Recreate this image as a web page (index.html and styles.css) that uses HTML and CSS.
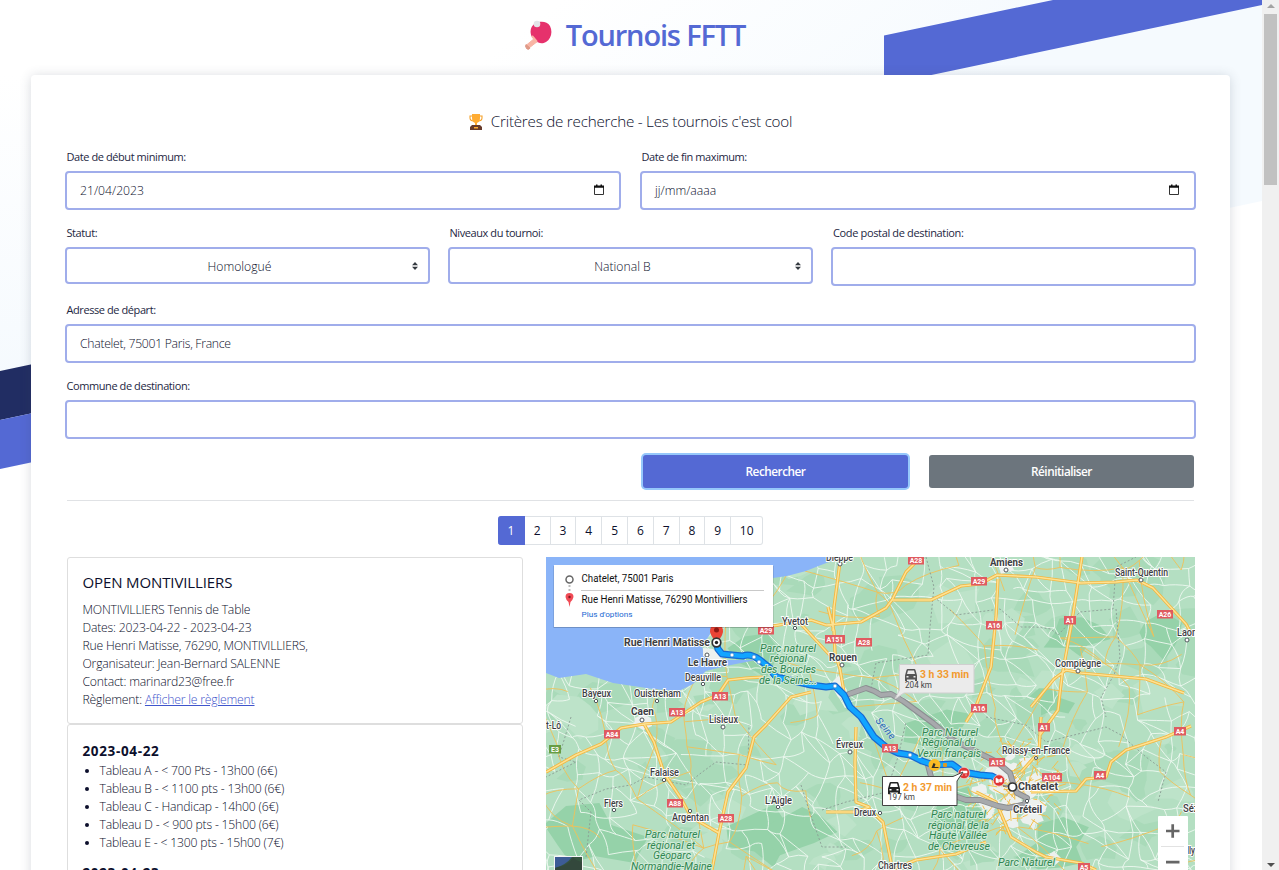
FILE: index.html
```html
<!DOCTYPE html>
<html lang="fr">
<head>
<meta charset="utf-8">
<title>Tournois FFTT</title>
<link rel="stylesheet" href="styles.css">
</head>
<body>
<div class="viewport">
<div class="page">
  <svg class="backdrop" viewBox="0 0 1262 870" aria-hidden="true">
    <defs><linearGradient id="sky" gradientUnits="userSpaceOnUse" x1="560" y1="0" x2="760" y2="260"><stop offset="0" stop-color="#fff"/><stop offset="1" stop-color="#f5fafe"/></linearGradient>
    <linearGradient id="skyLeft" x1="0" y1="0" x2="0" y2="1"><stop offset="0" stop-color="#fff"/><stop offset=".8" stop-color="#f5fafe"/></linearGradient></defs>
    <path d="M0 0H1262V201L0 469z" fill="url(#sky)"/>
    <path d="M0 75H31V463L0 469z" fill="url(#skyLeft)"/>
    <path d="M884 35.6L1053 0H1262V5L884 85z" fill="#5469d4"/>
    <path d="M0 371L378 291V340L0 420z" fill="#212d63"/>
    <path d="M0 420L378 340V389L0 469z" fill="#5469d4"/>
  </svg>
  <header class="brand">
    <svg class="paddle" viewBox="0 0 28 30"><path d="M11 18L2.500 25L5 28L14 21z" fill="#f8b5a5" stroke="#f8b5a5" stroke-linejoin="round"/><path d="M2 24.500l4 3.500-1 1.200-2-.2-1.500-2.500z" fill="#df9987" stroke="#df9987"/><path d="M8 17C5 11 7 6 11 3.500C16 1 23 1 26 6C29 12 27 19 22 22C18 24.500 14 23 12 21z" fill="#e6316c"/><path d="M8 16l5 6" stroke="#f8b5a5" stroke-width="2"/><circle cx="13" cy="4" r="3.300" fill="#e3e4e8"/></svg>
    <h1>Tournois FFTT</h1>
  </header>
  <main class="sheet">
    <h2 class="intro"><svg class="cup" viewBox="0 0 14 16"><path d="M3 2H1v2q0 3 4 3M11 2h2v2q0 3-4 3" fill="none" stroke="#f5a12a" stroke-width="1.100"/><path d="M3 0h8v4q0 4-3 5v3H6V9Q3 8 3 4z" fill="#ffac33"/><path d="M3 11h8l2 2v3H1v-3z" fill="#673b2b"/><path d="M5 13h4v1.500H5z" fill="#ffac33"/></svg><span>Critères de recherche - Les tournois c'est cool</span></h2>
    <form class="criteria">
      <div class="row halves">
        <label class="field"><span class="name">Date de début minimum:</span><span class="box wide"><span class="value">21/04/2023</span><svg class="cal" viewBox="0 0 12 12"><path d="M1.500 2.500h9v8h-9z" fill="none" stroke="#333" stroke-width="1"/><path d="M1 1.500h10v2.300H1zM3 .5h1.500v1H3zM7.500.5H9v1H7.500z" fill="#111"/></svg></span></label>
        <label class="field"><span class="name">Date de fin maximum:</span><span class="box wide"><span class="value">jj/mm/aaaa</span><svg class="cal" viewBox="0 0 12 12"><path d="M1.500 2.500h9v8h-9z" fill="none" stroke="#333" stroke-width="1"/><path d="M1 1.500h10v2.300H1zM3 .5h1.500v1H3zM7.500.5H9v1H7.500z" fill="#111"/></svg></span></label>
      </div>
      <div class="row thirds">
        <label class="field"><span class="name">Statut:</span><span class="box select"><span class="value">Homologué</span><svg class="caret" viewBox="0 0 6 8"><path d="M0 3.300L3 0l3 3.300zM0 4.700h6L3 8z" fill="#343a40"/></svg></span></label>
        <label class="field"><span class="name">Niveaux du tournoi:</span><span class="box select"><span class="value">National B</span><svg class="caret" viewBox="0 0 6 8"><path d="M0 3.300L3 0l3 3.300zM0 4.700h6L3 8z" fill="#343a40"/></svg></span></label>
        <label class="field"><span class="name postal">Code postal de destination:</span><span class="box"></span></label>
      </div>
      <div class="row"><label class="field"><span class="name">Adresse de départ:</span><span class="box"><span class="value address">Chatelet, 75001 Paris, France</span></span></label></div>
      <div class="row"><label class="field"><span class="name">Commune de destination:</span><span class="box"></span></label></div>
      <div class="actions"><button type="button" class="btn primary">Rechercher</button><button type="button" class="btn secondary">Réinitialiser</button></div>
    </form>
    <nav class="pages"><a class="current">1</a><a>2</a><a>3</a><a>4</a><a>5</a><a>6</a><a>7</a><a>8</a><a>9</a><a class="last">10</a></nav>
    <section class="results">
      <div class="details">
        <article class="card info">
          <h3>OPEN MONTIVILLIERS</h3>
          <p>MONTIVILLIERS Tennis de Table</p>
          <p>Dates: 2023-04-22 - 2023-04-23</p>
          <p>Rue Henri Matisse, 76290, MONTIVILLIERS,</p>
          <p>Organisateur: Jean-Bernard SALENNE</p>
          <p>Contact: marinard23@free.fr</p>
          <p>Règlement: <a class="link">Afficher le règlement</a></p>
        </article>
        <article class="card tables">
          <h4>2023-04-22</h4>
          <ul>
            <li>Tableau A - &lt; 700 Pts - 13h00 (6€)</li>
            <li>Tableau B - &lt; 1100 pts - 13h00 (6€)</li>
            <li>Tableau C - Handicap - 14h00 (6€)</li>
            <li>Tableau D - &lt; 900 pts - 15h00 (6€)</li>
            <li>Tableau E - &lt; 1300 pts - 15h00 (7€)</li>
          </ul>
          <h4>2023-04-23</h4>
        </article>
      </div>
      <svg class="map" viewBox="546 557 649 313">
        <g transform="translate(546 557)">
          <rect width="649" height="313" fill="#b4dfc2"/>
          <g id="woods"></g>
          <g id="minor" fill="none" stroke="#eef8f0" stroke-width=".9"></g>
          <g id="secondary" fill="none" stroke="#efc158" stroke-width=".9"></g>
          <path fill="#8ab4f8" d="M0 0H296L283 5L275 8L260 14L241 19L220 22L190 40L167 70L163 79L156 89L158 98L175 103L210 103L180 109L160 114L147 127L133 134L107 132L87 129L67 126L40 117L13 121L0 116z"/>
          <g fill="#edf1ef"><path d="M157 91l10 1 10 9-9 3-11-5zM89 161l8-4 8 4 1 8-9 4-9-5zM287 124l6-6 4 9 4 6-3 10-6-3-6-10zM452 7l12-2 4 8-13 4zM498 302l10-8 8 8-8 7z"/></g>
          <g id="suburbs" fill="#edf1ef"></g>
          <g id="streets" fill="none" stroke="#f3c04c" stroke-width="1"></g>
          <g fill="none" stroke="#8a9b93" stroke-dasharray="2 2" stroke-width=".9"><path d="M25 160L13 200L30 205L0 220M40 300L45 255L33 243L60 232L85 228L100 220L140 228L155 216L170 205L202 208L203 168M380 0L388 30L384 70L382 98L330 106L325 132M388 40L410 58L454 52L475 70L490 70L505 72L512 78L534 55L567 52L570 10L590 0M570 52L574 100L568 118L555 140L560 160M255 228L262 250L276 290L300 290M276 253L300 245L340 235L352 200L360 165M440 160L480 168L500 185L560 170L575 178L600 200L620 215L612 245"/></g>
          <g id="roads" fill="none" stroke-linejoin="round">
            <path d="M0 215L30 198L55 187L75 171L98 167L125 165L155 145L172 138L182 123L200 121L219 120M98 167L108 185L118 216L136 243L145 260L173 276L182 235L200 211L208 180L220 168L245 140L265 135M227 69L245 66L265 63L280 68L315 65L340 51L346 43L360 15L375 0M346 43L385 43L415 29L434 27L451 18L490 20L535 26L570 25L591 23L607 31L640 67L645 76M282 50L288 74L289 96L294 112L298 135M287 74L288 50L292 20L294 5M254 66L290 105M536 0L525 70L516 119L512 153L494 178M452 22L450 60L445 110L430 149L420 165M485 150L508 122L520 113L535 116L600 122L638 136M310 170L309 205L310 245L323 250L310 255L280 255M323 252L337 265L345 305M430 235L450 245L465 280L490 295M485 235L530 234L540 222L560 220L565 205L580 193L620 180L645 169M495 160L493 195L475 215M490 295L500 300L535 306L550 313M345 313L370 303L410 297L440 285M173 276L166 313"/>
          </g>
          <g fill="none" stroke-linecap="round" stroke-linejoin="round">
            <path stroke="#8b8d91" stroke-width="6" d="M303 137L320 131L328 134L335 138L345 137L357 144L372 155L387 166L407 183L433 196L451 205L464 216L467 226L471 236L481 241L479 246M382 208L385 220L400 236L420 243L434 243L452 249L462 251L476 248"/>
            <path stroke="#a7a9ac" stroke-width="4" d="M303 137L320 131L328 134L335 138L345 137L357 144L372 155L387 166L407 183L433 196L451 205L464 216L467 226L471 236L481 241L479 246M382 208L385 220L400 236L420 243L434 243L452 249L462 251L476 248"/>
            <path stroke="#1769d2" stroke-width="7" d="M170 85L172 92L176 97L186 98L197 99Q204 96 214 103L225 112Q228 121 235 121L265 128L280 130L289 129L298 138L304 150L315 160L328 180L340 190L352 196L364 198L376 204L388 208L406 207L417 215L434 218L446 219L453 223"/>
            <path stroke="#12a5ff" stroke-width="4.600" d="M170 85L172 92L176 97L186 98L197 99Q204 96 214 103L225 112Q228 121 235 121L265 128L280 130L289 129L298 138L304 150L315 160L328 180L340 190L352 196L364 198L376 204L388 208L406 207L417 215L434 218L446 219L453 223"/>
          </g>
          <g fill="#fff" stroke="#2f80cf" stroke-width=".7"><circle cx="186" cy="98" r="2"/><circle cx="208" cy="100" r="2"/><circle cx="213" cy="105" r="2"/><circle cx="289" cy="129" r="2"/><circle cx="364" cy="198" r="2"/></g>
          <g fill="#fff" stroke="#50575c"><circle cx="161" cy="98" r="2"/><circle cx="157" cy="127" r="1.700"/><circle cx="50" cy="144" r="1.700"/><circle cx="111" cy="144" r="1.700"/><circle cx="96" cy="163" r="2"/><circle cx="177" cy="170" r="2"/><circle cx="118" cy="223" r="1.700"/><circle cx="68" cy="253" r="1.700"/><circle cx="144" cy="254" r="1.700"/><circle cx="232" cy="250" r="1.700"/><circle cx="249" cy="71" r="1.700"/><circle cx="294" cy="7" r="2"/><circle cx="296" cy="108" r="2"/><circle cx="304" cy="195" r="2"/><circle cx="334" cy="256" r="1.700"/><circle cx="460" cy="13" r="2"/><circle cx="595" cy="23" r="2"/><circle cx="641" cy="83" r="2"/><circle cx="532" cy="114" r="2"/><circle cx="490" cy="201" r="1.500"/><circle cx="481" cy="244" r="1.700"/></g>
        </g>
        <g id="shields" class="shields"></g>
        <g id="places" class="places"></g>
        <text class="river" transform="translate(875 721) rotate(50)" textLength="25">Seine</text>
        <path d="M710 632q0-8 6.500-8t6.500 8q-1 5-6.500 11q-5-6-6.500-11z" fill="#ea4335"/><circle cx="716.500" cy="630" r="2.500" fill="#8d1814"/>
        <circle cx="716.500" cy="642.500" r="4.300" fill="#fff" stroke="#333" stroke-width="1.700"/><circle cx="716.500" cy="642.500" r="1.700" fill="#222"/>
        <path d="M1003 786h6" stroke="#444"/><circle cx="1012.500" cy="787" r="4" fill="#fff" stroke="#333" stroke-width="1.700"/>
        <circle cx="934.500" cy="765" r="6" fill="#fbbc24"/><path d="M931.500 768l2-5 2 1-1 3h4v1z" fill="#33302b"/><rect x="943" y="763" width="4" height="4" rx="1" fill="#d99a25"/>
        <g fill="#df3535" stroke="#f4d7d4" stroke-width=".7"><circle cx="964" cy="773" r="5.700"/><circle cx="999" cy="780.500" r="5.700"/></g>
        <path d="M961 771h6v2h-6zM961 775h2M965 775h2M996 778l2.500 1.500v3H996zM999.500 779.500l2.500-1.500v4h-2.500z" fill="#fff" stroke="#fff" stroke-width=".6"/>
        <path d="M899.500 664.500H974V693H904L895 699L899.500 690z" fill="#ebebeb" stroke="#cfcfcf"/>
        <path d="M905 675.500l1.500-5.500q.3-1 1.300-1h6.400q1 0 1.300 1l1.500 5.500v5.500h-2v-1.500h-8v1.500h-2zM908 670.500l-1 3.500h8l-1-3.500zM906.500 676v1.500h2V676zM913.500 676v1.500h2V676z" fill="#555" fill-rule="evenodd"/>
        <text class="time" x="920" y="678" textLength="49" lengthAdjust="spacingAndGlyphs">3 h 33 min</text><text class="km" x="905" y="688" textLength="27" lengthAdjust="spacingAndGlyphs">204 km</text>
        <path d="M882.500 776.500H953L963 772L957 781V805.500H882.500z" fill="#fff" stroke="#444"/>
        <path d="M888 788.500l1.500-5.500q.3-1 1.300-1h6.400q1 0 1.300 1l1.500 5.500v5.500h-2v-1.500h-8v1.500h-2zM891 783.500l-1 3.500h8l-1-3.500zM889.500 789v1.500h2V789zM896.500 789v1.500h2V789z" fill="#222" fill-rule="evenodd"/>
        <text class="time" x="903" y="791" textLength="49" lengthAdjust="spacingAndGlyphs">2 h 37 min</text><text class="km" x="888" y="800" textLength="27" lengthAdjust="spacingAndGlyphs">197 km</text>
        <rect x="553.500" y="566" width="220" height="62" fill="#0003"/><rect x="554" y="565" width="219" height="62" fill="#fff"/>
        <circle cx="569.500" cy="579.500" r="3.500" fill="none" stroke="#666" stroke-width="1.500"/><path d="M569.500 585v8" stroke="#bbb" stroke-width="2" stroke-dasharray="2 2"/>
        <path d="M565.500 597q0-4 4-4t4 4q-.7 3-3 5l-1 5-1-5q-2.500-2-3-5z" fill="#f04b55"/><circle cx="569.500" cy="597" r="1.200" fill="#7e1720"/>
        <path d="M581 590.500h183" stroke="#c9c9c9"/>
        <g class="trip"><text x="581.500" y="582" textLength="92" lengthAdjust="spacingAndGlyphs">Chatelet, 75001 Paris</text><text x="581.500" y="603" textLength="166" lengthAdjust="spacingAndGlyphs">Rue Henri Matisse, 76290 Montivilliers</text><text class="more" x="581.500" y="617" textLength="51" lengthAdjust="spacingAndGlyphs">Plus d'options</text></g>
        <rect x="554.500" y="856.500" width="28" height="20" fill="#35533f" stroke="#f5f5f5"/><path d="M555 857h17q-6 8-17 11z" fill="#3d5c96"/><path d="M555 868q15-3 18-11 3 4 9 5v8h-27z" fill="#33483c"/>
        <rect x="1158" y="816" width="30" height="60" rx="1" fill="#fff"/><path d="M1161 846.500h23" stroke="#e2e2e2"/><path d="M1166 831h13.500M1172.700 824.300v13.500M1166 862.200h13.500" stroke="#666" stroke-width="2.700"/>
      </svg>
    </section>
  </main>
</div>
<aside class="scroll"><i class="up"></i><i class="thumb"></i><i class="down"></i></aside>
</div>
<script src="map.js"></script>
</body>
</html>
```
FILE: styles.css
```css
* { box-sizing: border-box; }
body { margin: 0; background: #fff; color: #0c0f2c; font: 300 12.2px/18px "Open Sans", "Noto Sans", sans-serif; }
.viewport { display: flex; height: 870px; overflow: hidden; }
.page { position: relative; flex: 1; height: 870px; overflow: hidden; }
.backdrop { position: absolute; left: 0; top: 0; width: 1262px; height: 870px; }
.brand { position: relative; height: 75px; padding: 0 0 6px 7px; display: flex; align-items: center; justify-content: center; gap: 14px; }
.paddle { width: 28px; height: 30px; }
h1 { margin: 0; font: 600 29px/40px "Open Sans", sans-serif; color: #5469d4; letter-spacing: -1.15px; }
.sheet { position: relative; margin: 0 32px 0 31px; height: 900px; background: #fff; border-radius: 4px; padding: 36px 34px 0; box-shadow: 0 1px 12px rgba(60, 70, 90, .2); }
.intro { margin: 0; height: 21px; display: flex; justify-content: center; align-items: center; gap: 8px; font: 300 15.2px/21px "Open Sans", sans-serif; letter-spacing: -.23px; }
.cup { width: 14px; height: 16px; }
.criteria { margin: 15px 0 0; height: 354px; }
.row { display: grid; height: 76.300px; }
.halves { grid-template-columns: 1fr 1fr; column-gap: 19px; }
.thirds { grid-template-columns: 1fr 1fr 1fr; column-gap: 18px; }
.field { display: flex; flex-direction: column; }
.name { height: 20px; margin-bottom: 4px; padding-left: 1.500px; font: 400 11px/20px "Open Sans", sans-serif; letter-spacing: -.42px; white-space: nowrap; color: #24273f; }
.postal { letter-spacing: -.35px; padding-left: 2px; }
.box { height: 39px; display: flex; align-items: center; border: 2px solid #a0adeb; border-radius: 4px; padding: 0 13px; background: #fff; font-size: 12.2px; }
.wide { justify-content: space-between; padding-right: 14px; }
.select { height: 37px; padding: 2px 10px 0 0; }
.select .value { flex: 1; text-align: center; }
.select .caret { margin-top: -2px; }
.address { letter-spacing: -.28px; padding-top: 2px; }
.cal { width: 12px; height: 12px; margin-top: -1px; }
.caret { width: 6px; height: 8px; }
.actions { display: flex; justify-content: flex-end; gap: 21px; height: 50px; padding: 0 0 12px; margin: -1px 2px 0 2px; align-items: flex-end; border-bottom: 1px solid #e0e2e5; }
.btn { width: 265px; height: 33px; border: 0; border-radius: 3px; padding: 0; color: #fff; font: 600 11.800px/33px "Open Sans", sans-serif; letter-spacing: -.5px; }
.primary { background: #5469d4; box-shadow: 0 0 0 2px #96c8fb; }
.secondary { background: #6c757d; }
.pages { display: flex; justify-content: center; height: 29px; margin-top: 15px; font-size: 12px; font-weight: 400; }
.pages a { width: 25.800px; border: 1px solid #dee2e6; border-left: 0; text-align: center; line-height: 28px; }
.pages .current { width: 27px; background: #5469d4; border-color: #5469d4; color: #fff; border-radius: 3px 0 0 3px; }
.pages .last { width: 32px; border-radius: 0 3px 3px 0; }
.results { display: flex; gap: 23px; margin: 12px 1px 0 2px; }
.details { width: 456px; }
.map { width: 649px; height: 313px; display: block; }
.card { border: 1px solid #dedede; border-radius: 3px; padding: 0 14.500px; letter-spacing: -.19px; }
.info { height: 167px; padding-top: 15px; }
.tables { height: 300px; padding-top: 17px; }
h3 { margin: 0 0 9px; font: 400 15px/19px "Open Sans", sans-serif; letter-spacing: -.12px; }
.info p { margin: 0; white-space: nowrap; }
.link { color: #3f55cc; text-decoration: underline; }
h4 { margin: 0 0 1px; font: 700 13.500px/19px "Open Sans", sans-serif; letter-spacing: .65px; }
ul { margin: 0 0 12px; padding-left: 17px; }
.scroll { width: 17px; background: #f0f0f0; display: flex; flex-direction: column; align-items: center; }
.up { border: 4px solid transparent; border-top: 0; border-bottom-color: #a3a3a3; margin: 4px 0 6px; }
.thumb { width: 13px; height: 171px; background: #c1c1c1; }
.down { border: 4px solid transparent; border-bottom: 0; border-top-color: #505050; margin: auto 0 3px; }
.places text { font: 500 10px Roboto, sans-serif; fill: #3d4043; stroke: #fff; stroke-width: 1.8px; paint-order: stroke; }
.places .strong { font-size: 11px; font-weight: 700; }
.places .park { font-style: italic; font-weight: 400; font-size: 10.500px; fill: #2f8650; stroke: #d0ebd8; stroke-width: 2px; }
.shields text { font: 700 7px Roboto, sans-serif; fill: #fff; text-anchor: middle; }
.river { font: italic 10px Roboto, sans-serif; fill: #2365b4; stroke: #cfe8dc; stroke-width: 1px; paint-order: stroke; }
.time { font: 700 11px Roboto, sans-serif; fill: #f29a2e; }
.km { font: 8.500px Roboto, sans-serif; fill: #444; }
.trip { font: 10px Roboto, sans-serif; fill: #111; }
.trip .more { font-size: 8px; fill: #1a67d2; }
```
FILE: map.js
```js
const NS = 'http://www.w3.org/2000/svg';
const add = (id, tag, attrs, text) => {
  const el = document.createElementNS(NS, tag);
  for (const k in attrs) el.setAttribute(k, attrs[k]);
  if (text) el.textContent = text;
  document.getElementById(id).appendChild(el);
  return el;
};

// Seeded generator keeps the countryside identical on each load.
let seed = 42;
const rnd = () => (seed = (seed * 16807) % 2147483647) / 2147483647;

const blob = (x, y, r) => {
  let d = '';
  for (let k = 0; k < 9; k++) {
    const a = k * Math.PI * 2 / 9, q = r * (0.5 + rnd() * 0.8);
    d += (k ? 'L' : 'M') + (x + Math.cos(a) * q * 1.4).toFixed(1) + ' ' + (y + Math.sin(a) * q).toFixed(1);
  }
  return d + 'z';
};

// Wooded and open patches
for (let i = 0; i < 130; i++)
  add('woods', 'path', { d: blob(rnd() * 649, rnd() * 313, 5 + rnd() * 16), fill: i % 3 ? '#a9dab9' : '#bde3c9' });
[[215,100,20],[45,280,32],[220,280,30],[395,175,22],[415,260,28],[505,146,14],[530,82,20],[612,80,20],[510,290,25],[250,275,24]].forEach(([x, y, r]) =>
  add('woods', 'path', { d: blob(x, y, r), fill: '#95d2a9' }));

// Local road mesh: jittered nodes joined to their neighbours
const mesh = (id, step, keep) => {
  const cols = Math.ceil(649 / step) + 2, rows = Math.ceil(313 / step) + 2, p = [];
  for (let j = 0; j < rows; j++) for (let i = 0; i < cols; i++)
    p.push([(i - 0.5 + (rnd() - 0.5) * 0.9) * step, (j - 0.5 + (rnd() - 0.5) * 0.9) * step]);
  let d = '';
  for (let j = 0; j < rows - 1; j++) for (let i = 0; i < cols - 1; i++) {
    const n = j * cols + i;
    [n + 1, n + cols, rnd() > 0.6 ? n + cols + 1 : n].forEach(m => {
      if (m === n || rnd() > keep) return;
      const a = p[n], b = p[m];
      const mx = (a[0] + b[0]) / 2 + (rnd() - 0.5) * step * 0.4, my = (a[1] + b[1]) / 2 + (rnd() - 0.5) * step * 0.4;
      d += `M${a[0].toFixed(1)} ${a[1].toFixed(1)}Q${mx.toFixed(1)} ${my.toFixed(1)} ${b[0].toFixed(1)} ${b[1].toFixed(1)}`;
    });
  }
  add(id, 'path', { d });
};
mesh('minor', 19, 0.74);
mesh('secondary', 42, 0.55);

// Paris: built-up patches under a dense web of streets
for (let i = 0; i < 40; i++) {
  const a = rnd() * 6.28, r = rnd() * 42;
  add('suburbs', 'path', { d: blob(470 + Math.cos(a) * r, 230 + Math.sin(a) * r, 3 + rnd() * 6) });
}
let streets = '';
for (let i = 0; i < 130; i++) {
  const a = rnd() * 6.28, r = rnd() * 52, x = 468 + Math.cos(a) * r, y = 230 + Math.sin(a) * r;
  streets += `M${x} ${y}l${(rnd() - 0.5) * 22} ${(rnd() - 0.5) * 22}`;
}
add('streets', 'path', { d: streets });

// Motorways get a casing and a lighter core
const road = document.querySelector('#roads path');
road.setAttribute('stroke', '#f3b63f');
road.setAttribute('stroke-width', '3.2');
add('roads', 'path', { d: road.getAttribute('d'), stroke: '#fde293', 'stroke-width': 1.5 });

[['A28',916,560],['A29',979,581],['A29',766,630],['A151',835,639],['A28',864,642],['A16',994,625],['A1',1070,620],['A26',1165,614],['A16',979,708],['A13',720,696],['A13',677,712],['A84',612,734],['E3',555,749],['A88',675,803],['A28',726,818],['A13',890,748],['A15',997,762],['A1',1044,727],['A104',1052,777],['A4',1100,775],['A4',1180,731],['A5',1084,867]].forEach(([t, x, y]) => {
  const w = t.length * 4 + 4;
  add('shields', 'rect', { x: x - w / 2, y: y - 4, width: w, height: 8.5, fill: t[0] === 'E' ? '#679d45' : '#df5b60' });
  add('shields', 'text', { x, y: y + 3 }, t);
});

// label, left, baseline, width, style
[['Parc naturel',760,652,56,'park'],['régional',770,662,37,'park'],['des Boucles',761,673,55,'park'],['de la Seine...',759,684,58,'park'],['Parc Naturel',922,736,56,'park'],['Régional du',922,746,54,'park'],['Vexin français',917,757,64,'park'],['Parc naturel',931,818,55,'park'],['régional de la',928,829,61,'park'],['Haute Vallée',929,839,58,'park'],['de Chevreuse',928,850,62,'park'],['Parc Naturel',998,866,57,'park'],['Parc naturel',645,838,55,'park'],['régional et',647,849,48,'park'],['Géoparc',653,859,38,'park'],['Normandie-Maine',631,870,81,'park'],
['Rue Henri Matisse',624,646,86,'strong'],['Le Havre',688,666,39,'strong'],['Deauville',685,681,36],['Bayeux',582,697,29],['Ouistreham',634,697,47],['Caen',631,715,23,'strong'],['t-Lô',546,729,15],['Lisieux',709,723,29],['Falaise',650,776,29],['Flers',604,807,19],['Argentan',672,821,37],["L'Aigle",765,804,27],['Yvetot',782,625,26],['Dieppe',826,561,27],['Rouen',829,661,28,'strong'],['Évreux',836,748,27],['Dreux',854,816,22],['Chartres',878,869,34],['Amiens',990,566,33,'strong'],['Saint-Quentin',1115,576,53],['Laon',1177,636,20],['Compiègne',1055,667,46],['Roissy-en-France',1002,754,68],['Chatelet',1018,790,40,'strong'],['Créteil',1013,813,29,'strong'],['Sézanne',1183,812,36],['lly',1187,854,8]].forEach(([t, x, y, w, c]) =>
  add('places', 'text', { x, y, textLength: w, lengthAdjust: 'spacingAndGlyphs', class: c || 'town' }, t));
```
